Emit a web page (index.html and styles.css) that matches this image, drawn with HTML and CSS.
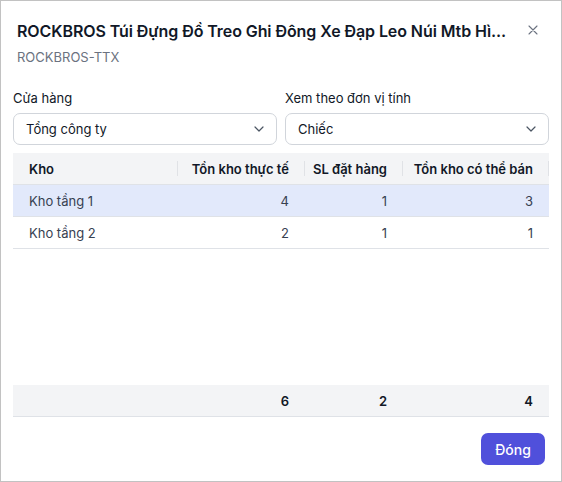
FILE: index.html
```html
<!DOCTYPE html>
<html lang="vi">
<head>
<meta charset="utf-8">
<link rel="stylesheet" href="styles.css">
</head>
<body>
<div class="modal">
  <div class="modal-header">
    <div class="titles">
      <h1 class="title">ROCKBROS Túi Đựng Đồ Treo Ghi Đông Xe Đạp Leo Núi Mtb Hì...</h1>
      <div class="subtitle">ROCKBROS-TTX</div>
    </div>
    <button class="close" aria-label="Đóng">
      <svg width="10" height="10" viewBox="0 0 10 10"><path d="M1 1L9 9M9 1L1 9" stroke="#6b7280" stroke-width="1.1" stroke-linecap="round"/></svg>
    </button>
  </div>
  <div class="filters">
    <div class="field">
      <label class="label">Cửa hàng</label>
      <div class="select"><span>Tổng công ty</span>
        <svg class="chev" width="10" height="6" viewBox="0 0 10 6"><path d="M1 1l4 4 4-4" fill="none" stroke="#4b5563" stroke-width="1.2" stroke-linecap="round" stroke-linejoin="round"/></svg>
      </div>
    </div>
    <div class="field">
      <label class="label">Xem theo đơn vị tính</label>
      <div class="select"><span>Chiếc</span>
        <svg class="chev" width="10" height="6" viewBox="0 0 10 6"><path d="M1 1l4 4 4-4" fill="none" stroke="#4b5563" stroke-width="1.2" stroke-linecap="round" stroke-linejoin="round"/></svg>
      </div>
    </div>
  </div>
  <div class="table">
    <div class="row head">
      <div class="cell">Kho</div>
      <div class="cell num">Tồn kho thực tế</div>
      <div class="cell num">SL đặt hàng</div>
      <div class="cell num">Tồn kho có thể bán</div>
    </div>
    <div class="tbody">
      <div class="row selected">
        <div class="cell">Kho tầng 1</div>
        <div class="cell num">4</div>
        <div class="cell num">1</div>
        <div class="cell num">3</div>
      </div>
      <div class="row">
        <div class="cell">Kho tầng 2</div>
        <div class="cell num">2</div>
        <div class="cell num">1</div>
        <div class="cell num">1</div>
      </div>
    </div>
    <div class="row foot">
      <div class="cell"></div>
      <div class="cell num">6</div>
      <div class="cell num">2</div>
      <div class="cell num">4</div>
    </div>
  </div>
  <div class="actions">
    <button class="btn-primary">Đóng</button>
  </div>
</div>
</body>
</html>
```

FILE: styles.css
```css
* { box-sizing: border-box; }
html, body { margin: 0; padding: 0; }
body {
  font-family: Inter, "Noto Sans", sans-serif;
  color: #111827;
  background: #fff;
}
.modal {
  width: 562px;
  height: 482px;
  border: 1px solid #c2c2c2;
  background: #fff;
  padding: 0 12px;
}
.modal-header {
  display: flex;
  align-items: flex-start;
  padding: 19px 0 0 4px;
}
.titles { flex: 1; min-width: 0; }
.title {
  margin: 0;
  font-size: 16px;
  font-weight: 600;
  letter-spacing: -0.08px;
  line-height: 22px;
  color: #111827;
  white-space: nowrap;
}
.subtitle {
  margin-top: 6px;
  font-size: 13px;
  line-height: 18px;
  color: #6b7280;
}
.close {
  border: 0;
  background: none;
  padding: 0;
  margin: 5px 11px 0 0;
  width: 10px;
  height: 10px;
  display: flex;
}
.filters {
  display: grid;
  grid-template-columns: 1fr 1fr;
  gap: 8px;
  margin-top: 23px;
}
.field { display: flex; flex-direction: column; }
.label {
  font-size: 13px;
  line-height: 18px;
  color: #111827;
  margin-bottom: 6px;
}
.select {
  height: 32px;
  border: 1px solid #d1d5db;
  border-radius: 7px;
  display: flex;
  align-items: center;
  justify-content: space-between;
  padding: 0 12px;
  font-size: 13px;
  color: #111827;
}
.table {
  margin-top: 8px;
  width: 536px;
}
.row {
  display: grid;
  grid-template-columns: 165px 127px 98px 146px;
  height: 32px;
  border-bottom: 1px solid #dfe2e7;
  font-size: 13px;
}
.cell {
  position: relative;
  display: flex;
  align-items: center;
  padding: 0 16px;
  color: #374151;
  white-space: nowrap;
}
.cell.num { justify-content: flex-end; }
.head { background: #f3f4f6; }
.head .cell { font-weight: 600; color: #111827; }
.head .cell::after {
  content: "";
  position: absolute;
  right: 0;
  top: 8px;
  width: 1px;
  height: 15px;
  background: #e0e2e6;
}
.tbody { height: 200px; }
.selected { background: #e2e9fb; }
.foot { background: #f3f4f6; }
.foot .cell { font-weight: 600; color: #111827; }
.actions {
  display: flex;
  justify-content: flex-end;
  margin-top: 16px;
  padding-right: 4px;
}
.btn-primary {
  font-family: inherit;
  width: 64px;
  height: 32px;
  border: 0;
  border-radius: 7px;
  background: #5050db;
  color: #fff;
  font-size: 14px;
  font-weight: 500;
}
```
